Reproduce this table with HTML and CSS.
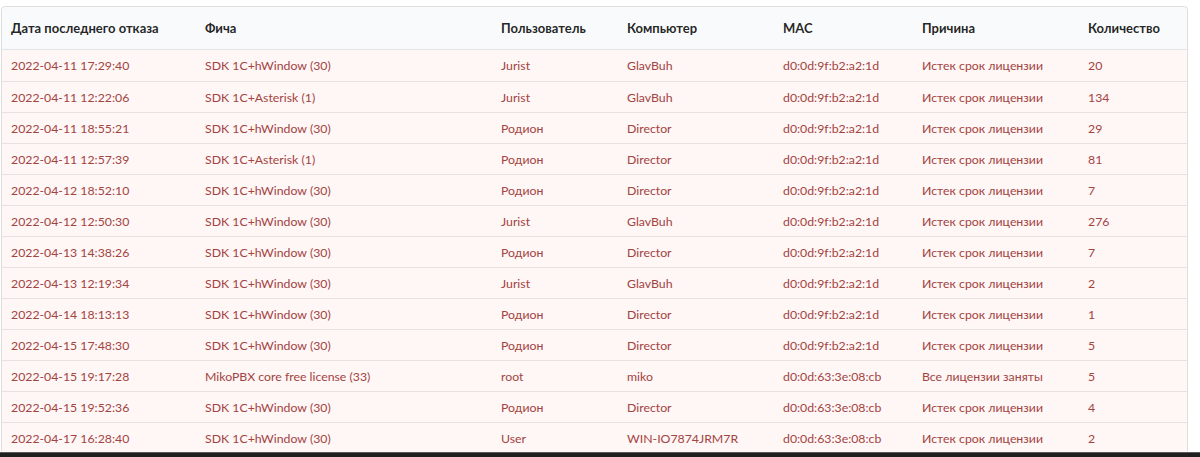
FILE: index.html
```html
<!DOCTYPE html>
<html lang="ru">
<head>
<meta charset="utf-8">
<title>Отказы лицензий</title>
<link rel="stylesheet" href="styles.css">
</head>
<body>
<div class="page">
<table class="ui-table">
<colgroup>
<col class="c1"><col class="c2"><col class="c3"><col class="c4"><col class="c5"><col class="c6"><col class="c7">
</colgroup>
<thead>
<tr><th>Дата последнего отказа</th><th>Фича</th><th>Пользователь</th><th>Компьютер</th><th>MAC</th><th>Причина</th><th>Количество</th></tr>
</thead>
<tbody>
<tr><td>2022-04-11 17:29:40</td><td>SDK 1C+hWindow (30)</td><td>Jurist</td><td>GlavBuh</td><td>d0:0d:9f:b2:a2:1d</td><td>Истек срок лицензии</td><td>20</td></tr>
<tr><td>2022-04-11 12:22:06</td><td>SDK 1C+Asterisk (1)</td><td>Jurist</td><td>GlavBuh</td><td>d0:0d:9f:b2:a2:1d</td><td>Истек срок лицензии</td><td>134</td></tr>
<tr><td>2022-04-11 18:55:21</td><td>SDK 1C+hWindow (30)</td><td>Родион</td><td>Director</td><td>d0:0d:9f:b2:a2:1d</td><td>Истек срок лицензии</td><td>29</td></tr>
<tr><td>2022-04-11 12:57:39</td><td>SDK 1C+Asterisk (1)</td><td>Родион</td><td>Director</td><td>d0:0d:9f:b2:a2:1d</td><td>Истек срок лицензии</td><td>81</td></tr>
<tr><td>2022-04-12 18:52:10</td><td>SDK 1C+hWindow (30)</td><td>Родион</td><td>Director</td><td>d0:0d:9f:b2:a2:1d</td><td>Истек срок лицензии</td><td>7</td></tr>
<tr><td>2022-04-12 12:50:30</td><td>SDK 1C+hWindow (30)</td><td>Jurist</td><td>GlavBuh</td><td>d0:0d:9f:b2:a2:1d</td><td>Истек срок лицензии</td><td>276</td></tr>
<tr><td>2022-04-13 14:38:26</td><td>SDK 1C+hWindow (30)</td><td>Родион</td><td>Director</td><td>d0:0d:9f:b2:a2:1d</td><td>Истек срок лицензии</td><td>7</td></tr>
<tr><td>2022-04-13 12:19:34</td><td>SDK 1C+hWindow (30)</td><td>Jurist</td><td>GlavBuh</td><td>d0:0d:9f:b2:a2:1d</td><td>Истек срок лицензии</td><td>2</td></tr>
<tr><td>2022-04-14 18:13:13</td><td>SDK 1C+hWindow (30)</td><td>Родион</td><td>Director</td><td>d0:0d:9f:b2:a2:1d</td><td>Истек срок лицензии</td><td>1</td></tr>
<tr><td>2022-04-15 17:48:30</td><td>SDK 1C+hWindow (30)</td><td>Родион</td><td>Director</td><td>d0:0d:9f:b2:a2:1d</td><td>Истек срок лицензии</td><td>5</td></tr>
<tr><td>2022-04-15 19:17:28</td><td>MikoPBX core free license (33)</td><td>root</td><td>miko</td><td>d0:0d:63:3e:08:cb</td><td>Все лицензии заняты</td><td>5</td></tr>
<tr><td>2022-04-15 19:52:36</td><td>SDK 1C+hWindow (30)</td><td>Родион</td><td>Director</td><td>d0:0d:63:3e:08:cb</td><td>Истек срок лицензии</td><td>4</td></tr>
<tr><td>2022-04-17 16:28:40</td><td>SDK 1C+hWindow (30)</td><td>User</td><td>WIN-IO7874JRM7R</td><td>d0:0d:63:3e:08:cb</td><td>Истек срок лицензии</td><td>2</td></tr>
</tbody>
</table>
</div>
<div class="taskbar"></div>
</body>
</html>
```

FILE: styles.css
```css
html, body {
  margin: 0;
  padding: 0;
  background: #ffffff;
  overflow: hidden;
}
body {
  font-family: Lato, "Open Sans", "Liberation Sans", sans-serif;
  font-size: 13px;
}
.page {
  padding: 6px 0 0 1px;
}
.ui-table {
  width: 1187px;
  table-layout: fixed;
  border-collapse: separate;
  border-spacing: 0;
  border: 1px solid rgba(34, 36, 38, 0.15);
  border-radius: 4px;
  color: rgba(0, 0, 0, 0.87);
}
.c1 { width: 194px; }
.c2 { width: 296px; }
.c3 { width: 126px; }
.c4 { width: 156px; }
.c5 { width: 139px; }
.c6 { width: 166px; }
.c7 { width: 108px; }
.ui-table th {
  background: #f9fafb;
  text-align: left;
  font-weight: 700;
  height: 42px;
  padding: 0 9px;
  border-bottom: 1px solid rgba(34, 36, 38, 0.1);
  white-space: nowrap;
}
.ui-table thead tr th:first-child { border-top-left-radius: 4px; }
.ui-table thead tr th:last-child { border-top-right-radius: 4px; }
.ui-table td {
  background: #fff6f6;
  color: #a2443f;
  font-size: 12.3px;
  height: 30px;
  padding: 0 9px;
  border-top: 1px solid rgba(34, 36, 38, 0.1);
  white-space: nowrap;
}
.ui-table tbody tr:first-child td { border-top: none; height: 31px; }
.taskbar {
  position: fixed;
  left: 0;
  right: 0;
  bottom: 0;
  height: 4px;
  background: #1f1f1f;
  border-top: 1px solid #5a5a5a;
}
```
